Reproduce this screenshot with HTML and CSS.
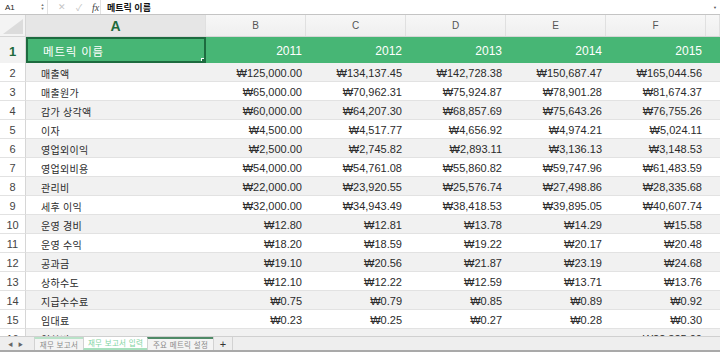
FILE: index.html
```html
<!DOCTYPE html>
<html lang="ko">
<head>
    <meta charset="UTF-8">
    <title>재무 보고서</title>
    <link rel="stylesheet" href="styles.css">
</head>
<body>
    <div class="formula-bar">
        <div class="name-box">A1</div>
        <div class="stepper"><span>▲</span><span>▼</span></div>
        <div class="fb-icons">
            <span class="fb-x">✕</span>
            <span class="fb-ok">✓</span>
            <span class="fb-fx">fx</span>
        </div>
        <div class="fb-value">메트릭 이름</div>
        <div class="fb-drop">▼</div>
    </div>

    <div class="sheet">
        <div class="row col-head">
            <div class="corner"></div>
            <div class="ch selected">A</div>
            <div class="ch">B</div>
            <div class="ch">C</div>
            <div class="ch">D</div>
            <div class="ch">E</div>
            <div class="ch">F</div>
            <div class="ch"></div>
        </div>

        <div class="row title-row">
            <div class="rh active">1</div>
            <div class="cell name active-cell">메트릭 이름</div>
            <div class="cell num">2011</div>
            <div class="cell num">2012</div>
            <div class="cell num">2013</div>
            <div class="cell num">2014</div>
            <div class="cell num">2015</div>
            <div class="cell"></div>
        </div>

        <div id="rows"></div>
    </div>

    <div class="tab-bar">
        <div class="tab-arrows"><span>◀</span><span>▶</span></div>
        <div class="tab first">재무 보고서</div>
        <div class="tab current">재무 보고서 입력</div>
        <div class="tab third">주요 메트릭 설정</div>
        <div class="tab-add">+</div>
    </div>

    <script>
  const data = [
    ["매출액", "₩125,000.00", "₩134,137.45", "₩142,728.38", "₩150,687.47", "₩165,044.56"],
    ["매출원가", "₩65,000.00", "₩70,962.31", "₩75,924.87", "₩78,901.28", "₩81,674.37"],
    ["감가 상각액", "₩60,000.00", "₩64,207.30", "₩68,857.69", "₩75,643.26", "₩76,755.26"],
    ["이자", "₩4,500.00", "₩4,517.77", "₩4,656.92", "₩4,974.21", "₩5,024.11"],
    ["영업외이익", "₩2,500.00", "₩2,745.82", "₩2,893.11", "₩3,136.13", "₩3,148.53"],
    ["영업외비용", "₩54,000.00", "₩54,761.08", "₩55,860.82", "₩59,747.96", "₩61,483.59"],
    ["관리비", "₩22,000.00", "₩23,920.55", "₩25,576.74", "₩27,498.86", "₩28,335.68"],
    ["세후 이익", "₩32,000.00", "₩34,943.49", "₩38,418.53", "₩39,895.05", "₩40,607.74"],
    ["운영 경비", "₩12.80", "₩12.81", "₩13.78", "₩14.29", "₩15.58"],
    ["운영 수익", "₩18.20", "₩18.59", "₩19.22", "₩20.17", "₩20.48"],
    ["공과금", "₩19.10", "₩20.56", "₩21.87", "₩23.19", "₩24.68"],
    ["상하수도", "₩12.10", "₩12.22", "₩12.59", "₩13.71", "₩13.76"],
    ["지급수수료", "₩0.75", "₩0.79", "₩0.85", "₩0.89", "₩0.92"],
    ["임대료", "₩0.23", "₩0.25", "₩0.27", "₩0.28", "₩0.30"],
    ["임차비", "", "", "", "", "₩22,325.00"]
  ];

  const rows = document.getElementById("rows");

  data.forEach(function (item, i) {
    const row = document.createElement("div");
    row.className = "row body-row" + (i % 2 === 0 ? " stripe" : "");

    let html = '<div class="rh">' + (i + 2) + '</div>';
    html += '<div class="cell name">' + item[0] + '</div>';
    for (let c = 1; c < item.length; c++) {
      html += '<div class="cell num">' + item[c] + '</div>';
    }
    html += '<div class="cell"></div>';

    row.innerHTML = html;
    rows.appendChild(row);
  });
</script>
</body>
</html>
```

FILE: styles.css
```css
* {
    box-sizing: border-box;
}

body {
    margin: 0;
    width: 720px;
    height: 352px;
    overflow: hidden;
    display: flex;
    flex-direction: column;
    font-family: "Liberation Sans", Arial, "Noto Sans CJK KR", sans-serif;
    color: #2b2b2b;
    background-color: white;
}

/* formula bar */

.formula-bar {
    height: 15px;
    flex: none;
    display: flex;
    align-items: center;
    border-bottom: 1px solid #c4c4c4;
    background-color: white;
    font-size: 9px;
}

.name-box {
    width: 38px;
    padding-left: 5px;
    font-size: 8px;
    color: #222;
}

.stepper {
    width: 10px;
    display: flex;
    flex-direction: column;
    align-items: center;
    font-size: 4px;
    line-height: 4px;
    color: #777;
    border-right: 1px solid #e2e2e2;
    height: 14px;
    justify-content: center;
}

.fb-icons {
    display: flex;
    align-items: center;
    height: 14px;
    padding-left: 10px;
    border-right: 1px solid #e2e2e2;
    width: 53px;
}

.fb-x {
    color: #c4c4c4;
    font-size: 9px;
    width: 18px;
}

.fb-ok {
    color: #c4c4c4;
    font-size: 9px;
    width: 16px;
}

.fb-fx {
    font-family: "Liberation Serif", serif;
    font-style: italic;
    font-size: 10px;
    color: #444;
}

.fb-value {
    flex: 1;
    padding-left: 6px;
    font-family: "Noto Sans CJK KR", sans-serif;
    font-size: 9px;
    font-weight: bold;
    color: #111;
}

.fb-drop {
    font-size: 4px;
    color: #555;
    padding-right: 3px;
}

/* grid */

.sheet {
    flex: 1;
    overflow: hidden;
}

.row {
    display: grid;
    grid-template-columns: 26px 180px repeat(5, 100px) 14px;
}

.col-head {
    height: 22px;
    background: linear-gradient(#f7f7f7, #efefef);
    border-bottom: 1px solid #d6d6d6;
}

.corner {
    position: relative;
    border-right: 1px solid #d6d6d6;
    background-color: #f4f4f4;
}

.corner::after {
    content: "";
    position: absolute;
    right: 2px;
    bottom: 2px;
    border-left: 20px solid transparent;
    border-bottom: 15px solid #dcdcdc;
}

.ch {
    display: flex;
    align-items: center;
    justify-content: center;
    border-right: 1px solid #e0e0e0;
    font-size: 10px;
    color: #555;
}

.ch.selected {
    background-color: #e6e6e6;
    color: #1e6a3c;
    font-size: 14px;
    font-weight: bold;
}

.rh {
    display: flex;
    align-items: center;
    justify-content: center;
    background-color: white;
    border-right: 1px solid #d6d6d6;
    font-size: 11px;
    color: #444;
    padding-top: 2px;
}

.rh.active {
    font-size: 13px;
    font-weight: bold;
    color: #1e6a3c;
    background-color: #f2f2f2;
}

.cell {
    display: flex;
    align-items: center;
    padding: 0 4px;
    font-size: 11px;
    white-space: nowrap;
    overflow: hidden;
}

.cell.name {
    padding-left: 15px;
    font-family: "Noto Sans CJK KR", sans-serif;
    font-size: 10px;
    letter-spacing: 0.3px;
}

.cell.num {
    justify-content: flex-end;
}

.title-row {
    height: 26px;
    background-color: #47b675;
    color: white;
}

.title-row .cell {
    font-size: 12px;
    padding-top: 1px;
}

.title-row .cell.name {
    font-size: 11.5px;
    letter-spacing: 0.8px;
    padding-left: 15px;
}

.active-cell {
    position: relative;
    border: 2px solid #1d6b3f;
}

.active-cell::after {
    content: "";
    position: absolute;
    right: -4px;
    bottom: -4px;
    width: 5px;
    height: 5px;
    background-color: #1d6b3f;
    border: 1px solid white;
}

.body-row {
    height: 19px;
    border-bottom: 1px solid #e2e2e2;
}

.body-row .cell {
    padding-top: 2px;
}

.body-row .rh {
    border-bottom: 1px solid #e2e2e2;
    margin-bottom: -1px;
}

.stripe {
    background-color: #f1f1f1;
}

/* sheet tabs */

.tab-bar {
    height: 16px;
    flex: none;
    display: flex;
    align-items: stretch;
    background-color: #eeeeee;
    border-top: 1px solid #d0d0d0;
    border-bottom: 2px solid #a9a9a9;
    font-family: "Noto Sans CJK KR", sans-serif;
    font-size: 7.5px;
    color: #8a8a8a;
}

.tab-arrows {
    width: 34px;
    display: flex;
    align-items: center;
    gap: 5px;
    padding-left: 8px;
    font-size: 5px;
    color: #666;
}

.tab {
    display: flex;
    align-items: center;
    justify-content: center;
    border-left: 1px solid #d2d2d2;
    letter-spacing: 0.3px;
}

.tab.first {
    width: 49px;
    border-top: 2px solid #b9e2c8;
    background-color: #f4f4f4;
}

.tab.current {
    width: 64px;
    background-color: white;
    color: #7fd4a2;
    border-bottom: 2px solid #a7e0bd;
}

.tab.third {
    width: 66px;
    border-top: 2px solid #4f8a67;
    background-color: #f4f4f4;
}

.tab-add {
    width: 20px;
    display: flex;
    align-items: center;
    justify-content: center;
    border-left: 1px solid #d2d2d2;
    border-right: 1px solid #d2d2d2;
    font-family: "Liberation Sans", sans-serif;
    font-size: 11px;
    color: #333;
}
```
